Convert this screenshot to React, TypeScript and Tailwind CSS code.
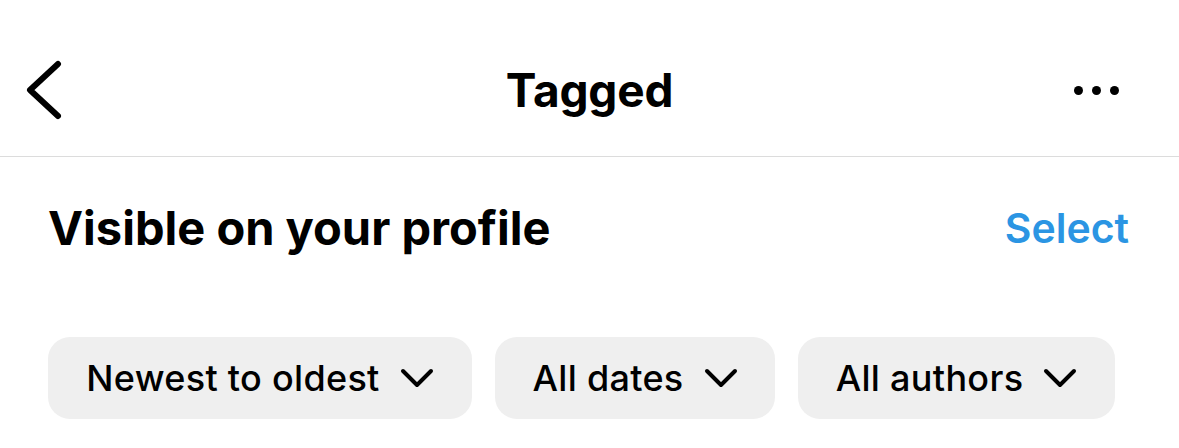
import React from "react";

function ChevronDown() {
  return (
    <svg width="34" height="22" viewBox="0 0 34 22" fill="none" className="shrink-0">
      <polyline points="3,4 17,18 31,4" stroke="#000" strokeWidth="4" strokeLinecap="round" strokeLinejoin="round" />
    </svg>
  );
}

function Chip({ label, width }: { label: string; width: string }) {
  return (
    <button className={`${width} h-[82px] rounded-[22px] bg-[#efefef] flex items-center justify-center gap-[20px] text-[36px] font-medium text-black tracking-[0.3px]`}>
      <span>{label}</span>
      <ChevronDown />
    </button>
  );
}

export default function App() {
  return (
    <div className="w-[1179px] h-[448px] bg-white overflow-hidden" style={{ fontFamily: "Inter, 'Noto Sans', sans-serif" }}>
      <header className="h-[157px] pt-[24px] border-b border-[#dcdcdc] flex items-center justify-between pl-[24px] pr-[60px] relative">
        <svg width="40" height="60" viewBox="0 0 40 60" fill="none">
          <polyline points="34,4 6,30 34,56" stroke="#000" strokeWidth="6" strokeLinecap="round" strokeLinejoin="round" />
        </svg>
        <h1 className="absolute left-0 right-0 top-[24px] bottom-0 flex items-center justify-center text-[46px] font-bold text-black tracking-[-0.2px] pointer-events-none">
          Tagged
        </h1>
        <div className="flex items-center gap-[9px]">
          <span className="w-[9px] h-[9px] rounded-full bg-black" />
          <span className="w-[9px] h-[9px] rounded-full bg-black" />
          <span className="w-[9px] h-[9px] rounded-full bg-black" />
        </div>
      </header>

      <main className="px-[48px]">
        <div className="flex items-center justify-between mt-[43px] pr-[2px]">
          <h2 className="text-[47px] font-bold text-black leading-[56px]">Visible on your profile</h2>
          <button className="text-[41px] font-semibold text-[#2b95e3] leading-[56px]">Select</button>
        </div>

        <div className="flex gap-[23px] mt-[81px]">
          <Chip label="Newest to oldest" width="w-[424px]" />
          <Chip label="All dates" width="w-[280px]" />
          <Chip label="All authors" width="w-[317px]" />
        </div>
      </main>
    </div>
  );
}
